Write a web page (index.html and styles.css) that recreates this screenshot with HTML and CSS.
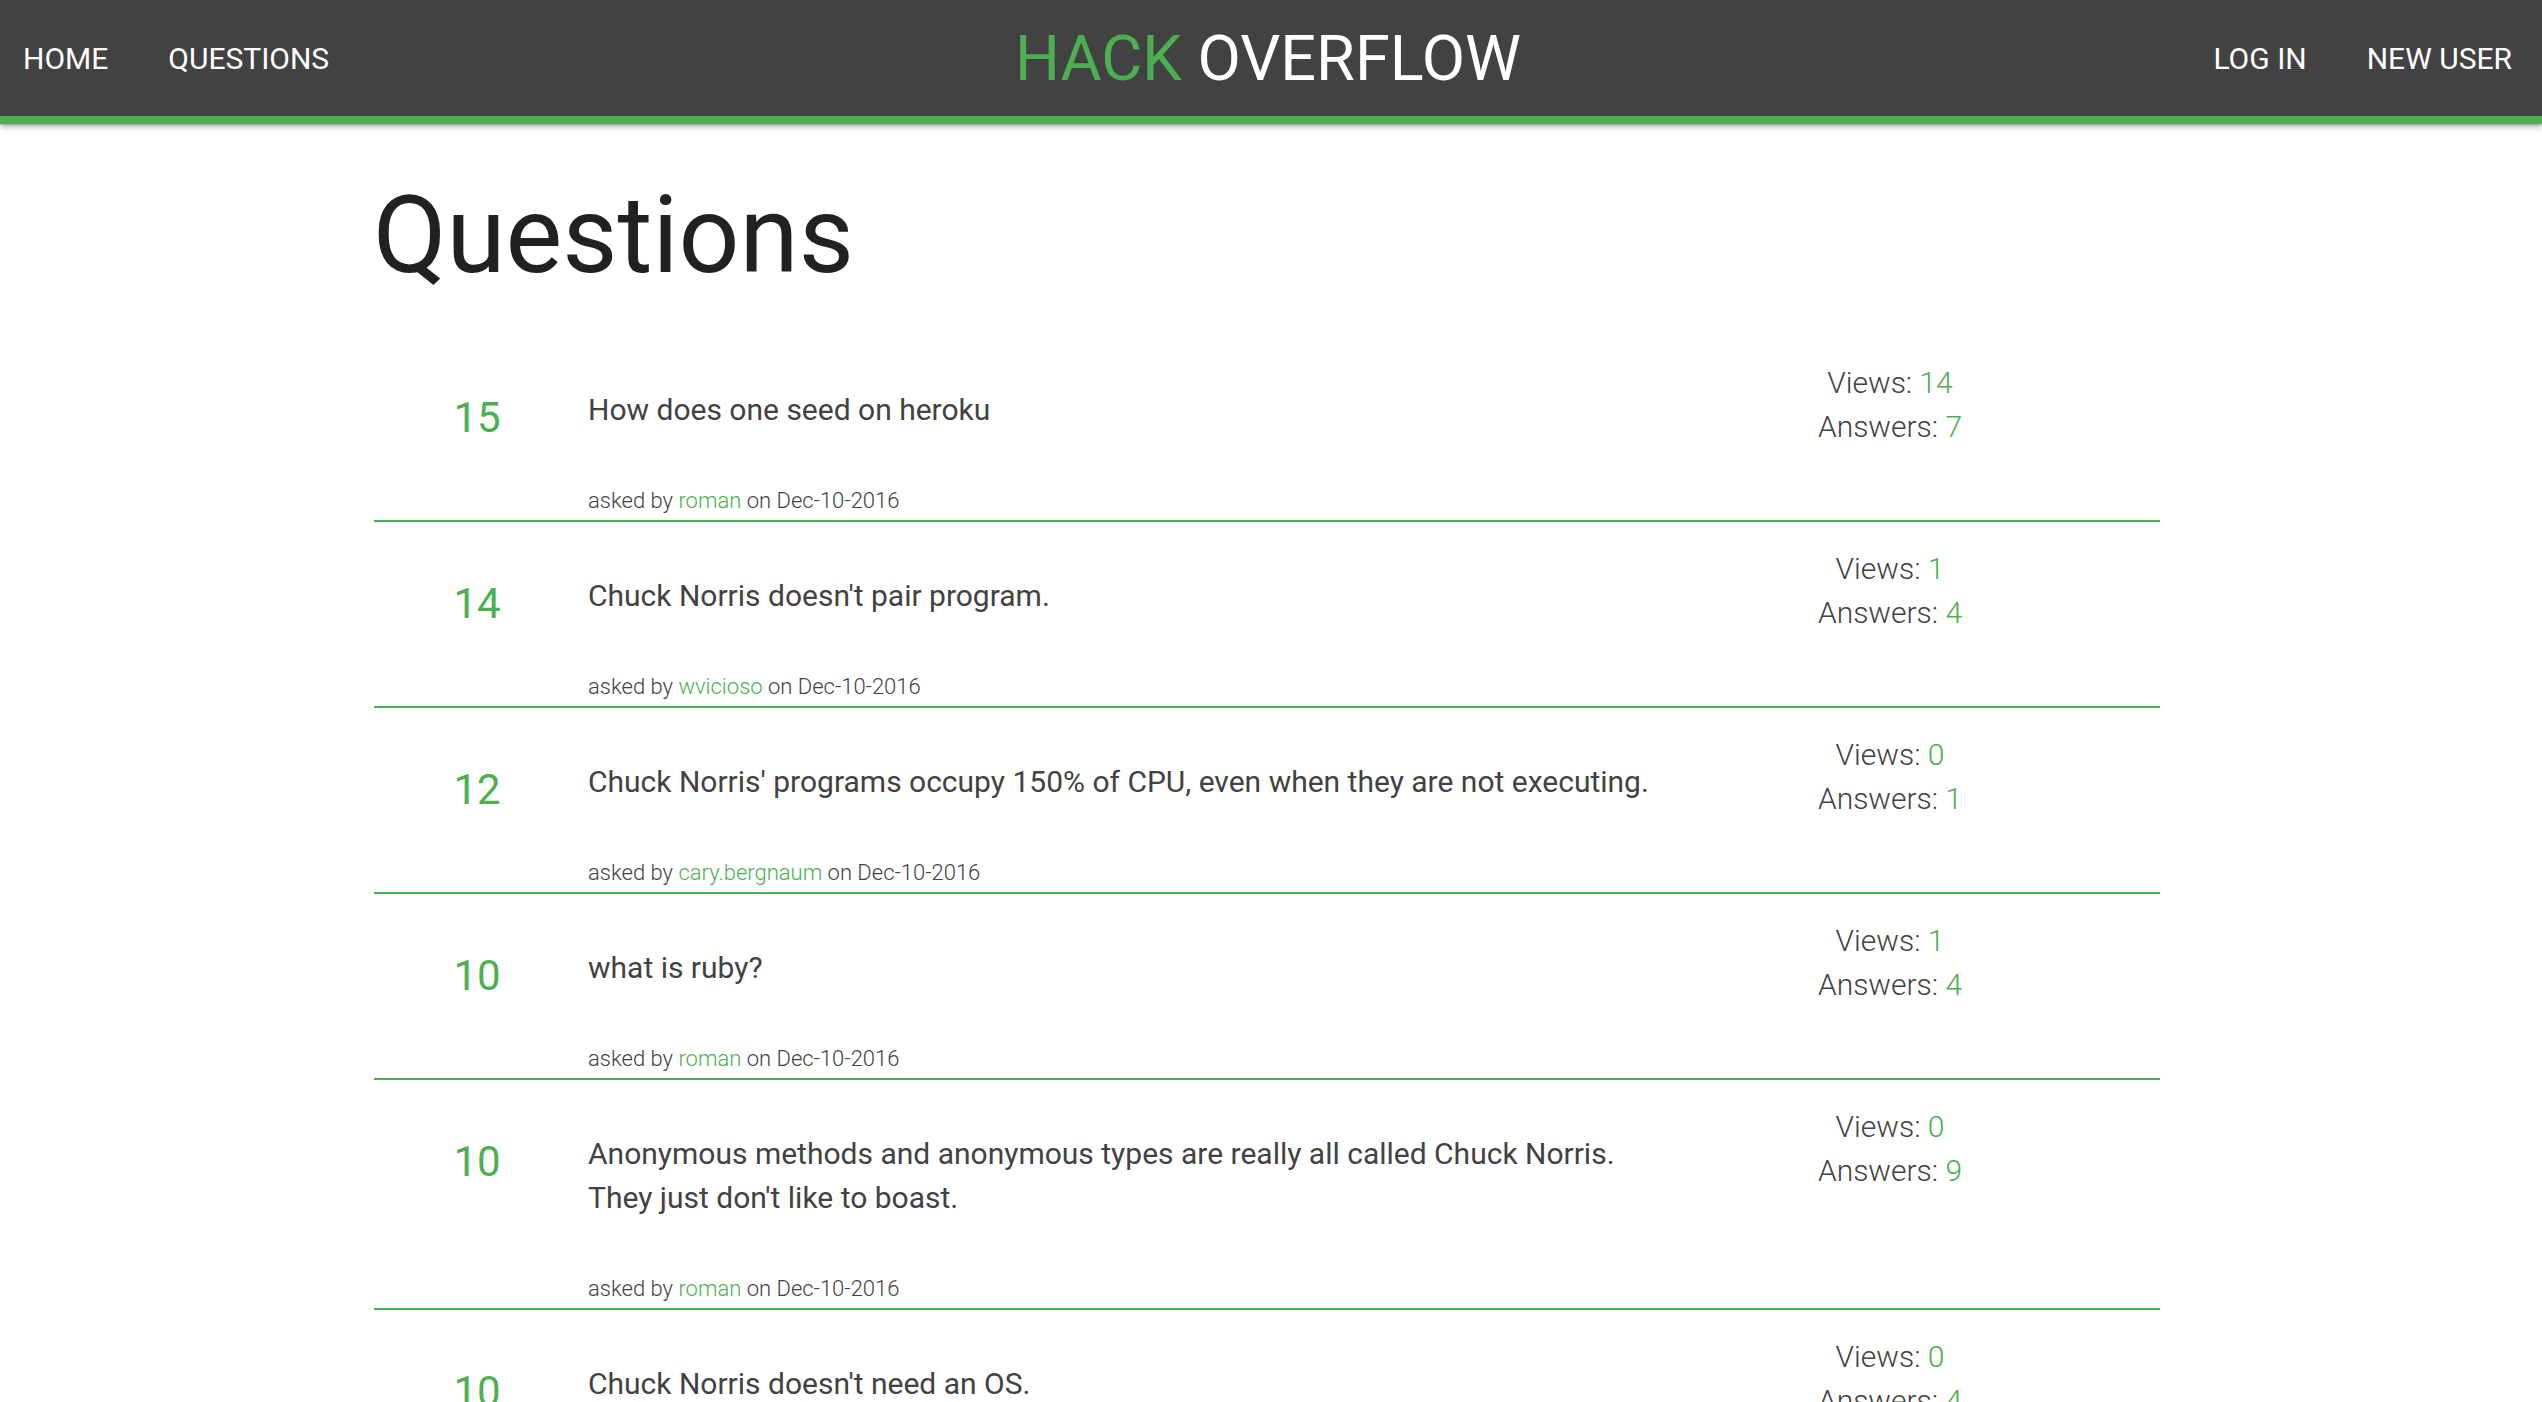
FILE: index.html
```html
<!DOCTYPE html>
<html lang="en">
<head>
<meta charset="utf-8">
<title>Hack Overflow - Questions</title>
<link rel="stylesheet" href="styles.css">
</head>
<body>
<nav class="topnav">
  <ul class="nav-links nav-left">
    <li><a href="#">HOME</a></li>
    <li><a href="#">QUESTIONS</a></li>
  </ul>
  <a class="brand" href="#"><span class="brand-accent">HACK</span> OVERFLOW</a>
  <ul class="nav-links nav-right">
    <li><a href="#">LOG IN</a></li>
    <li><a href="#">NEW USER</a></li>
  </ul>
</nav>

<main class="container">
  <h1 class="page-title">Questions</h1>

  <ul class="question-list">
    <li class="question">
      <div class="q-votes">15</div>
      <div class="q-body">
        <p class="q-title">How does one seed on heroku</p>
        <p class="q-meta">asked by <a href="#">roman</a> on Dec-10-2016</p>
      </div>
      <div class="q-stats">
        <div>Views: <span class="num">14</span></div>
        <div>Answers: <span class="num">7</span></div>
      </div>
    </li>
    <li class="question">
      <div class="q-votes">14</div>
      <div class="q-body">
        <p class="q-title">Chuck Norris doesn't pair program.</p>
        <p class="q-meta">asked by <a href="#">wvicioso</a> on Dec-10-2016</p>
      </div>
      <div class="q-stats">
        <div>Views: <span class="num">1</span></div>
        <div>Answers: <span class="num">4</span></div>
      </div>
    </li>
    <li class="question">
      <div class="q-votes">12</div>
      <div class="q-body">
        <p class="q-title">Chuck Norris' programs occupy 150% of CPU, even when they are not executing.</p>
        <p class="q-meta">asked by <a href="#">cary.bergnaum</a> on Dec-10-2016</p>
      </div>
      <div class="q-stats">
        <div>Views: <span class="num">0</span></div>
        <div>Answers: <span class="num">1</span></div>
      </div>
    </li>
    <li class="question">
      <div class="q-votes">10</div>
      <div class="q-body">
        <p class="q-title">what is ruby?</p>
        <p class="q-meta">asked by <a href="#">roman</a> on Dec-10-2016</p>
      </div>
      <div class="q-stats">
        <div>Views: <span class="num">1</span></div>
        <div>Answers: <span class="num">4</span></div>
      </div>
    </li>
    <li class="question">
      <div class="q-votes">10</div>
      <div class="q-body">
        <p class="q-title">Anonymous methods and anonymous types are really all called Chuck Norris. They just don't like to boast.</p>
        <p class="q-meta">asked by <a href="#">roman</a> on Dec-10-2016</p>
      </div>
      <div class="q-stats">
        <div>Views: <span class="num">0</span></div>
        <div>Answers: <span class="num">9</span></div>
      </div>
    </li>
    <li class="question">
      <div class="q-votes">10</div>
      <div class="q-body">
        <p class="q-title">Chuck Norris doesn't need an OS.</p>
        <p class="q-meta">asked by <a href="#">roman</a> on Dec-10-2016</p>
      </div>
      <div class="q-stats">
        <div>Views: <span class="num">0</span></div>
        <div>Answers: <span class="num">4</span></div>
      </div>
    </li>
  </ul>
</main>
</body>
</html>
```

FILE: styles.css
```css
html {
  scrollbar-width: none;
}
html::-webkit-scrollbar {
  display: none;
}
* {
  box-sizing: border-box;
}
body {
  margin: 0;
  font-family: Roboto, "Noto Sans", Arial, sans-serif;
  color: #212121;
  background: #ffffff;
}
a {
  text-decoration: none;
  color: inherit;
}

/* ---------- top navigation ---------- */
.topnav {
  display: grid;
  grid-template-columns: 1fr auto 1fr;
  align-items: center;
  height: 124px;
  background: #424242;
  border-bottom: 8px solid #4caf50;
  box-shadow: 0 3px 6px rgba(0, 0, 0, 0.28), 0 1px 2px rgba(0, 0, 0, 0.2);
  position: relative;
  z-index: 1;
}
.nav-links {
  list-style: none;
  margin: 0;
  padding: 0;
  display: flex;
}
.nav-left {
  justify-self: start;
  margin-left: -7px;
}
.nav-right {
  justify-self: end;
}
.nav-links a {
  display: block;
  padding: 0 30px;
  line-height: 118px;
  font-size: 30px;
  color: #ffffff;
}
.brand {
  padding-right: 6px;
  font-size: 63px;
  line-height: 118px;
  color: #ffffff;
  white-space: nowrap;
}
.brand-accent {
  color: #4caf50;
}

/* ---------- main ---------- */
.container {
  width: 1786px;
  margin: 0 auto;
  padding-right: 8px;
  box-sizing: content-box;
}
.page-title {
  margin: 53px 0 0 -1px;
  font-size: 107px;
  line-height: 118px;
  font-weight: 400;
  color: #212121;
}
.question-list {
  list-style: none;
  margin: 41px 0 0;
  padding: 0;
}
.question {
  display: grid;
  grid-template-columns: 206px 1075px 438px;
  column-gap: 8px;
  padding-bottom: 4px;
  border-bottom: 2px solid #4caf50;
}
.q-votes {
  padding-top: 60px;
  font-size: 42px;
  line-height: 44px;
  text-align: center;
  color: #4caf50;
}
.q-body {
  padding-top: 52px;
}
.q-title {
  margin: 0;
  font-size: 30px;
  line-height: 44px;
  color: #424242;
}
.q-meta {
  margin: 54px 0 0;
  font-size: 22px;
  line-height: 30px;
  font-weight: 300;
  color: #424242;
}
.q-meta a {
  color: #4caf50;
}
.q-stats {
  padding-top: 25px;
  font-size: 30px;
  line-height: 44px;
  font-weight: 300;
  color: #424242;
  text-align: center;
}
.num {
  color: #4caf50;
}
```
